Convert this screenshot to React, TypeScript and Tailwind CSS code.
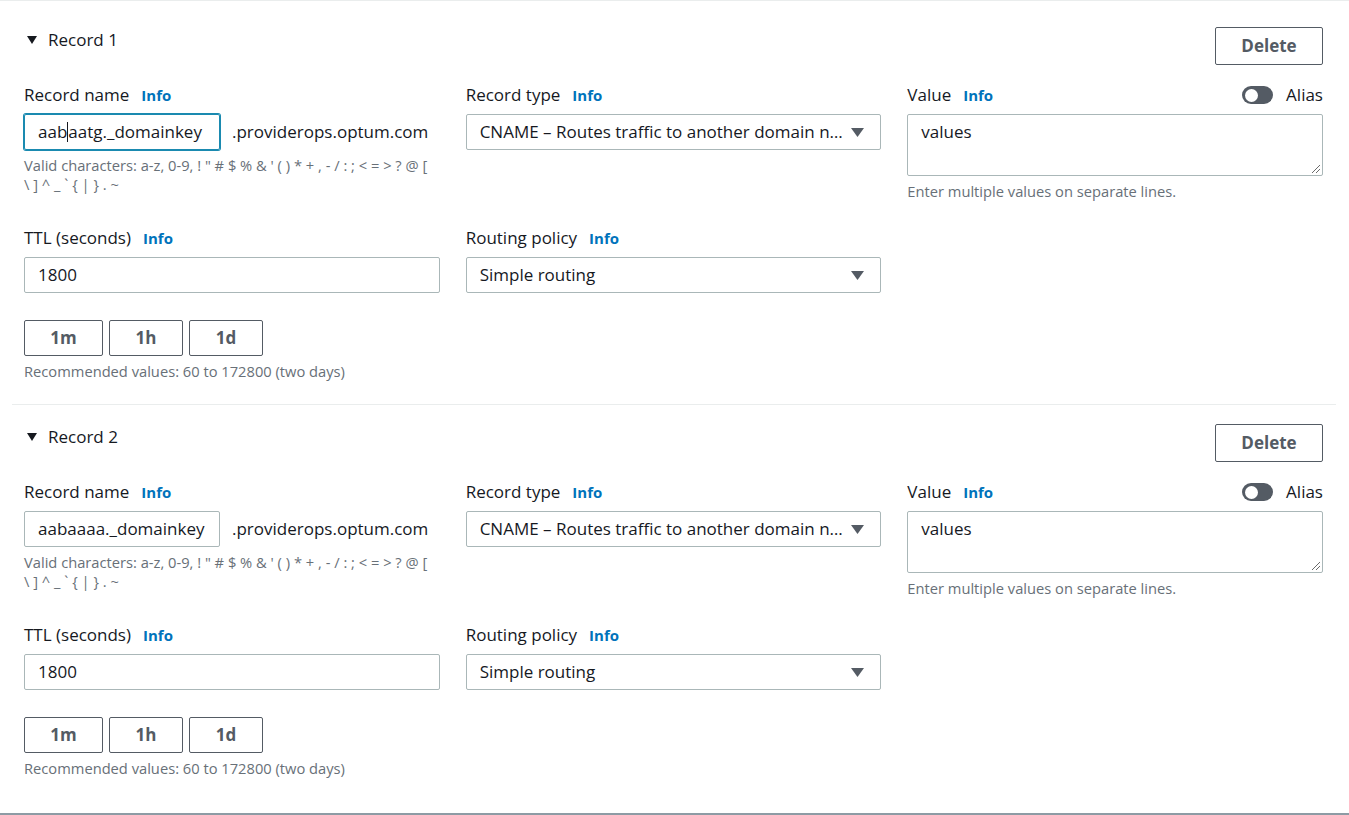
import { ReactNode } from 'react';

const FONT = "font-['Open_Sans',_'Noto_Sans',_sans-serif]";

function Info() {
  return <span className="ml-3 text-[15px] font-bold text-[#0073bb]">Info</span>;
}

function Label({ children }: { children: ReactNode }) {
  return (
    <div className="flex items-center h-[22px] text-[17px] leading-[22px] text-[#16191f]">
      {children}
      <Info />
    </div>
  );
}

function Caret() {
  return (
    <svg width="13" height="9" viewBox="0 0 13 9" className="shrink-0">
      <path d="M0 0 H13 L6.5 9 Z" fill="#545b64" />
    </svg>
  );
}

function Select({ value }: { value: string }) {
  return (
    <div className="mt-2 h-9 flex items-center gap-2 pl-[13px] pr-[16px] border border-[#aab7b8] rounded-[2px] text-[17px] text-[#16191f]">
      <span className="flex-1 truncate">{value}</span>
      <Caret />
    </div>
  );
}

function Hint({ children }: { children: ReactNode }) {
  return <p className="mt-[6px] text-[14.7px] leading-[19px] text-[#687078]">{children}</p>;
}

function Button({ children, className }: { children: ReactNode; className: string }) {
  return (
    <button className={`h-9 border border-[#545b64] rounded-[2px] text-[17px] font-bold text-[#545b64] bg-white ${className}`}>
      {children}
    </button>
  );
}

function Toggle() {
  return (
    <span className="w-[31px] h-[18px] rounded-full bg-[#545b64] flex items-center px-[3px]">
      <span className="w-[13px] h-[13px] rounded-full bg-white" />
    </span>
  );
}

function Record({ index, name, focused, first }: { index: number; name: string; focused?: boolean; first?: boolean }) {
  return (
    <section className={`${first ? 'pt-[26px]' : 'pt-[19px] border-t border-[#eaeded]'} pl-3 pr-[13px] pb-[23px]`}>
      <div className="flex items-start justify-between h-[38px]">
        <div className="flex items-center h-[26px] ml-[3px] gap-[11px] text-[17px] text-[#16191f]">
          <svg width="10" height="8" viewBox="0 0 10 8">
            <path d="M0 0 H10 L5 8 Z" fill="#16191f" />
          </svg>
          <span>Record {index}</span>
        </div>
        <Button className="w-[108px] h-[38px]">Delete</Button>
      </div>

      <div className="mt-[19px] grid grid-cols-3 gap-x-[26px] gap-y-[26px]">
        <div>
          <Label>Record name</Label>
          <div className="mt-2 flex items-center">
            <div
              className={`w-[196px] h-9 flex items-center pl-[13px] rounded-[2px] text-[17px] text-[#16191f] border ${
                focused ? 'border-[#1a8ab0] shadow-[0_0_0_1px_#1a8ab0]' : 'border-[#aab7b8]'
              }`}
            >
              {focused ? (
                <>
                  aab<span className="inline-block w-px h-[20px] bg-[#16191f]" />aatg._domainkey
                </>
              ) : (
                name
              )}
            </div>
            <span className="ml-3 text-[17px] text-[#16191f]">.providerops.optum.com</span>
          </div>
          <Hint>
            Valid characters: a-z, 0-9, ! " # $ % &amp; ' ( ) * + , - / : ; &lt; = &gt; ? @ [
            <br />\ ] ^ _ ` {'{'} | {'}'} . ~
          </Hint>
        </div>

        <div>
          <Label>Record type</Label>
          <Select value="CNAME – Routes traffic to another domain name and to some AWS resources" />
        </div>

        <div>
          <div className="flex items-center justify-between h-[22px] leading-[22px]">
            <Label>Value</Label>
            <div className="flex items-center gap-[13px] text-[17px] text-[#16191f]">
              <Toggle />
              <span>Alias</span>
            </div>
          </div>
          <div className="relative mt-2 h-[62px] border border-[#aab7b8] rounded-[2px] pl-[13px] pt-[4px] text-[17px] text-[#16191f]">
            values
            <svg width="11" height="11" viewBox="0 0 11 11" className="absolute right-[1px] bottom-[1px]">
              <path d="M10 2 L2 10 M10 6 L6 10" stroke="#6b6b6b" strokeWidth="1" />
            </svg>
          </div>
          <Hint>Enter multiple values on separate lines.</Hint>
        </div>

        <div>
          <Label>TTL (seconds)</Label>
          <div className="mt-2 h-9 flex items-center pl-[13px] border border-[#aab7b8] rounded-[2px] text-[17px] text-[#16191f]">
            1800
          </div>
          <div className="mt-[27px] flex gap-[6px]">
            <Button className="w-[79px]">1m</Button>
            <Button className="w-[74px]">1h</Button>
            <Button className="w-[74px]">1d</Button>
          </div>
          <Hint>Recommended values: 60 to 172800 (two days)</Hint>
        </div>

        <div>
          <Label>Routing policy</Label>
          <Select value="Simple routing" />
        </div>

        <div />
      </div>
    </section>
  );
}

export default function App() {
  return (
    <div className={`${FONT} h-[815px] bg-white border-t border-[#eaeded] flex flex-col`}>
      <div className="ml-3 mr-[13px]">
        <Record index={1} name="aabaatg._domainkey" focused first />
        <Record index={2} name="aabaaaa._domainkey" />
      </div>
      <div className="flex-1" />
      <div className="h-[2px] bg-[#8d9ba4]" />
    </div>
  );
}
